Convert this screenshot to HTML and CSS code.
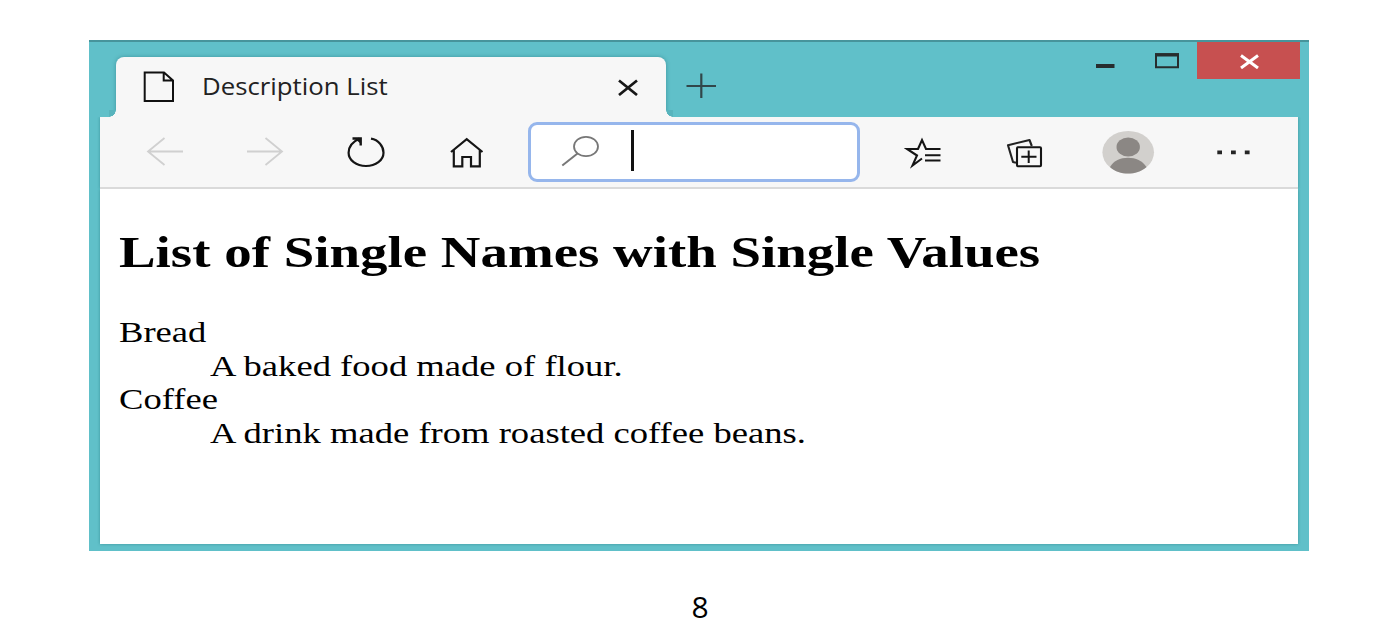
FILE: index.html
```html
<!DOCTYPE html>
<html lang="en">
<head>
<meta charset="utf-8">
<title>Description List</title>
<link rel="stylesheet" href="styles.css">
</head>
<body>
<main class="window">
  <header class="titlebar">
    <div class="tab">
      <svg class="tab-icon" width="32" height="32" viewBox="143 71 32 32"><path d="M144.7 72.5H164L173 80.5V101H144.7ZM163.7 72.5V80.5H173" fill="none" stroke="#111" stroke-width="2"/></svg>
      <span class="tab-title">Description List</span>
      <svg class="tab-close" width="22" height="18" viewBox="617 78 22 18"><path d="M619 80.5L637 95M637 80.5L619 95" stroke="#171717" stroke-width="2.7"/></svg>
    </div>
    <svg class="new-tab" width="32" height="28" viewBox="685 72 32 28"><path d="M686.5 86H716M701.3 73.5V98" stroke="#31474a" stroke-width="2.2"/></svg>
    <div class="controls">
      <svg width="101" height="38" viewBox="1096 42 101 38"><path d="M1096 66H1114.5" stroke="#272d2e" stroke-width="4"/><path d="M1156 54.5H1178V67.3H1156Z" fill="none" stroke="#272d2e" stroke-width="2"/><path d="M1155 54.8H1179" stroke="#272d2e" stroke-width="3.4"/></svg>
      <div class="close"><svg width="22" height="16" viewBox="1238 53 22 16"><path d="M1241 55.5L1258 68M1258 55.5L1241 68" stroke="#fff" stroke-width="3"/></svg></div>
    </div>
  </header>
  <nav class="toolbar">
    <svg class="back" width="40" height="71" viewBox="145 117 40 71"><path d="M183 151.5H148M164.5 138L148 151.5L164.5 165" fill="none" stroke="#d0d0d0" stroke-width="1.8"/></svg>
    <svg class="forward" width="40" height="71" viewBox="245 117 40 71"><path d="M247 151.5H282M265.5 138L282 151.5L265.5 165" fill="none" stroke="#d0d0d0" stroke-width="1.8"/></svg>
    <svg class="reload" width="40" height="71" viewBox="346 117 40 71"><path d="M371 138.7C378.5 140 383.5 146 383.5 152.7C383.5 160.2 375.8 166 366 166S348.6 160.2 348.6 152.7C348.6 147 352 142 359.5 138.5" fill="none" stroke="#151515" stroke-width="2.2"/><path d="M352.5 138.5H360.7V145.5" fill="none" stroke="#151515" stroke-width="2.4"/><path d="M354 138H361V144Z" fill="#151515"/></svg>
    <svg class="home" width="36" height="71" viewBox="449 117 36 71"><path d="M451 152L466.7 139.2L482.5 152M453.8 149.8V166.3H462.3V157H471V166.3H479.8V149.8" fill="none" stroke="#151515" stroke-width="2.2"/></svg>
    <div class="address">
      <svg width="40" height="34" viewBox="562 136 40 34"><ellipse cx="587" cy="147.5" rx="12" ry="9.7" fill="none" stroke="#777" stroke-width="1.8"/><path d="M578.5 154.5L563.3 166.5" stroke="#777" stroke-width="2"/></svg>
      <span class="caret"></span>
    </div>
    <svg class="favorites" width="38" height="71" viewBox="904 117 38 71"><path d="M940.5 149H926L922 140L918 149H907L917 155.5L912.5 165.5L922 158.5" fill="none" stroke="#151515" stroke-width="2.1"/><path d="M925 155.2H940.5M925 160.5H940.5" stroke="#151515" stroke-width="2.1"/></svg>
    <svg class="collections" width="37" height="71" viewBox="1006 117 37 71"><path d="M1016 162.8L1013 162L1008 145.2L1029.5 140L1031.8 146" fill="none" stroke="#222" stroke-width="2.1" stroke-linejoin="round"/><rect x="1017" y="147.3" width="24" height="19" rx="1" fill="none" stroke="#151515" stroke-width="2.1"/><path d="M1021.3 156.8H1036.5M1028.7 150.5V163" stroke="#151515" stroke-width="2"/></svg>
    <svg class="avatar" width="54" height="71" viewBox="1101 117 54 71"><ellipse cx="1128.2" cy="152.3" rx="25.8" ry="21.3" fill="#d2d0cd"/><ellipse cx="1128.2" cy="147" rx="11.7" ry="9.5" fill="#8b8784"/><path d="M1110 167C1114 160.5 1120 157.7 1128 157.7S1142 160.5 1146.5 167C1141 171.7 1134.5 173.6 1128 173.6S1115 171.7 1110 167Z" fill="#8b8784"/></svg>
    <svg class="more" width="34" height="71" viewBox="1217 117 34 71"><path d="M1217.3 152.3H1222M1231 152.3H1235.8M1244.8 152.3H1249.6" stroke="#252525" stroke-width="3.8"/></svg>
  </nav>
  <article class="page">
    <h2 class="heading">List of Single Names with Single Values</h2>
    <dl class="list">
      <dt class="line">Bread</dt>
      <dd class="line value">A baked food made of flour.</dd>
      <dt class="line">Coffee</dt>
      <dd class="line value">A drink made from roasted coffee beans.</dd>
    </dl>
  </article>
</main>
<footer class="page-number">8</footer>
</body>
</html>
```
FILE: styles.css
```css
* { box-sizing: border-box; }
body { margin: 0; background: #fff; width: 1378px; height: 623px; overflow: hidden; padding: 40px 0 0 89px; }
svg { display: block; flex: none; }

.window {
  width: 1220px;
  height: 511px;
  padding: 0 11px 7px;
  background: #60c0c9;
  border-top: 2px solid #47949b;
}
.titlebar { display: flex; height: 75px; }
.tab {
  position: relative;
  display: flex;
  align-items: center;
  width: 550px;
  height: 60px;
  margin: 15px 0 0 16px;
  padding-left: 27px;
  background: #f7f7f7;
  border-radius: 8px 8px 0 0;
  box-shadow: 0 0 4px rgba(0, 70, 80, .35);
}
.tab::before, .tab::after {
  content: "";
  position: absolute;
  bottom: 0;
  width: 7px;
  height: 7px;
}
.tab::before { left: -7px; background: radial-gradient(circle at 0 0, #58b4bd 6.5px, #f7f7f7 7px); }
.tab::after { right: -7px; background: radial-gradient(circle at 100% 0, #58b4bd 6.5px, #f7f7f7 7px); }
.tab-title {
  width: 184px;
  margin: -2px 0 0 27px;
  font: 23px/32px "Open Sans", sans-serif;
  color: #222;
  white-space: nowrap;
  transform: scaleX(1.12);
  transform-origin: 0 50%;
}
.tab-close { margin-left: 231px; }
.new-tab { margin: 30px 0 0 19px; }
.controls { display: flex; margin-left: auto; margin-right: -2px; }
.close {
  display: flex;
  align-items: center;
  justify-content: center;
  width: 103px;
  height: 37px;
  background: #c75050;
}

.toolbar {
  display: flex;
  align-items: center;
  height: 72px;
  padding-left: 45px;
  background: #f7f7f7;
  border-bottom: 2px solid #dadada;
  box-shadow: 0 0 3px #3d939c;
  clip-path: inset(0 -3px 0 -3px);
}
.forward { margin-left: 60px; }
.reload { margin-left: 61px; }
.home { margin-left: 63px; }
.address {
  display: flex;
  align-items: center;
  width: 332px;
  height: 60px;
  margin-left: 43px;
  padding-left: 30px;
  background: #fff;
  border: 3px solid #96b6ec;
  border-radius: 9px;
}
.caret { width: 3px; height: 41px; margin: -4px 0 0 30px; background: #111; }
.favorites { margin-left: 44px; }
.collections { margin-left: 64px; }
.avatar { margin-left: 58px; }
.more { margin-left: 62px; }

.page {
  height: 355px;
  padding: 38px 19px 0;
  background: #fff;
  box-shadow: 0 0 3px #3d939c;
  clip-path: inset(0 -3px -3px -3px);
  font-family: "Liberation Serif", serif;
  color: #000;
}
.heading {
  width: max-content;
  margin: 0 0 38px;
  font-size: 45px;
  line-height: 50px;
  transform: scaleX(1.22);
  transform-origin: 0 50%;
}
.list { margin: 0; }
.line {
  width: max-content;
  margin: 0;
  font-size: 30px;
  line-height: 33.7px;
  transform: scaleX(1.22);
  transform-origin: 0 50%;
}
.value { margin-left: 91px; }

.page-number {
  width: 1222px;
  margin-top: 42px;
  text-align: center;
  font: 30px/28px "Open Sans", sans-serif;
  color: #000;
}
```
